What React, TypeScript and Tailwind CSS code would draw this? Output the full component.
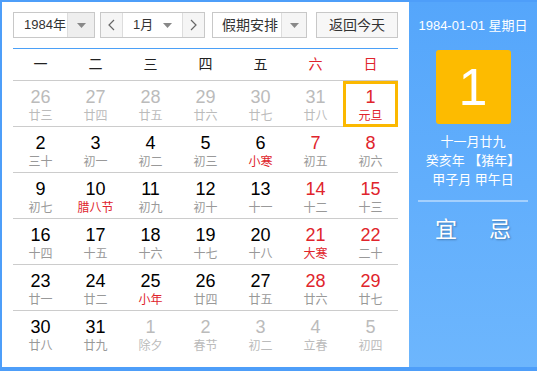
import React from 'react';

type Day = { d: number; l: string; other?: boolean; festival?: boolean; sel?: boolean };

const WEEK = ['一', '二', '三', '四', '五', '六', '日'];

const ROWS: Day[][] = [
  [
    { d: 26, l: '廿三', other: true },
    { d: 27, l: '廿四', other: true },
    { d: 28, l: '廿五', other: true },
    { d: 29, l: '廿六', other: true },
    { d: 30, l: '廿七', other: true },
    { d: 31, l: '廿八', other: true },
    { d: 1, l: '元旦', festival: true, sel: true },
  ],
  [
    { d: 2, l: '三十' },
    { d: 3, l: '初一' },
    { d: 4, l: '初二' },
    { d: 5, l: '初三' },
    { d: 6, l: '小寒', festival: true },
    { d: 7, l: '初五' },
    { d: 8, l: '初六' },
  ],
  [
    { d: 9, l: '初七' },
    { d: 10, l: '腊八节', festival: true },
    { d: 11, l: '初九' },
    { d: 12, l: '初十' },
    { d: 13, l: '十一' },
    { d: 14, l: '十二' },
    { d: 15, l: '十三' },
  ],
  [
    { d: 16, l: '十四' },
    { d: 17, l: '十五' },
    { d: 18, l: '十六' },
    { d: 19, l: '十七' },
    { d: 20, l: '十八' },
    { d: 21, l: '大寒', festival: true },
    { d: 22, l: '二十' },
  ],
  [
    { d: 23, l: '廿一' },
    { d: 24, l: '廿二' },
    { d: 25, l: '小年', festival: true },
    { d: 26, l: '廿四' },
    { d: 27, l: '廿五' },
    { d: 28, l: '廿六' },
    { d: 29, l: '廿七' },
  ],
  [
    { d: 30, l: '廿八' },
    { d: 31, l: '廿九' },
    { d: 1, l: '除夕', other: true },
    { d: 2, l: '春节', other: true },
    { d: 3, l: '初二', other: true },
    { d: 4, l: '立春', other: true },
    { d: 5, l: '初四', other: true },
  ],
];

const Caret = () => (
  <svg width="9" height="5" viewBox="0 0 9 5">
    <path d="M0 0 L9 0 L4.5 5 Z" fill="#888" />
  </svg>
);

const Chevron = ({ dir }: { dir: 'l' | 'r' }) => (
  <svg width="7" height="12" viewBox="0 0 7 12">
    <path d={dir === 'l' ? 'M6 1 L1 6 L6 11' : 'M1 1 L6 6 L1 11'} stroke="#666" strokeWidth="1.2" fill="none" />
  </svg>
);

export default function App() {
  return (
    <div
      className="flex h-[371px] w-[537px] bg-[#4e9ef9] pt-[2px] pb-[4px] pl-[2px]"
      style={{ fontFamily: '"Liberation Sans", "Noto Sans CJK SC", sans-serif' }}
    >
      {/* left: calendar */}
      <div className="w-[407px] bg-white px-[11px] pt-[10px]">
        <div className="flex h-[26px] items-stretch text-[13px] text-[#333]">
          <div className="flex w-[82px] border border-[#c8c8c8]">
            <div className="flex flex-1 items-center pl-[10px]">1984年</div>
            <div className="flex w-[27px] items-center justify-center border-l border-[#ddd] bg-[#eeeeee]">
              <Caret />
            </div>
          </div>
          <div className="ml-[5px] flex w-[105px] border border-[#c8c8c8]">
            <div className="flex w-[22px] items-center justify-center border-r border-[#ddd] bg-[#f5f5f5]">
              <Chevron dir="l" />
            </div>
            <div className="flex flex-1 items-center justify-between pl-[10px] pr-[10px]">
              <span>1月</span>
              <Caret />
            </div>
            <div className="flex w-[22px] items-center justify-center border-l border-[#ddd] bg-[#f5f5f5]">
              <Chevron dir="r" />
            </div>
          </div>
          <div className="ml-[7px] flex w-[95px] border border-[#c8c8c8]">
            <div className="flex flex-1 items-center pl-[9px] text-[14px]">假期安排</div>
            <div className="flex w-[25px] items-center justify-center border-l border-[#ddd] bg-[#f5f5f5]">
              <Caret />
            </div>
          </div>
          <div className="ml-[9px] flex w-[82px] items-center justify-center border border-[#c8c8c8] bg-[#f7f7f7] text-[14px]">
            返回今天
          </div>
        </div>

        <div className="mt-[10px] h-px bg-[#4ba0f7]" />

        <div className="grid h-[32px] grid-cols-7 border-b border-[#cccccc] text-[14px]">
          {WEEK.map((w, i) => (
            <div key={w} className={`flex items-center justify-center ${i >= 5 ? 'text-[#e0242c]' : 'text-[#222]'}`}>
              {w}
            </div>
          ))}
        </div>

        {ROWS.map((row, ri) => (
          <div
            key={ri}
            className={`grid h-[46px] grid-cols-7 ${ri < ROWS.length - 1 ? 'border-b border-[#cccccc]' : ''}`}
          >
            {row.map((c, ci) => {
              const weekend = ci >= 5;
              const numColor = c.other ? 'text-[#bbbbbb]' : c.sel || weekend ? 'text-[#e0242c]' : 'text-black';
              const lunarColor = c.other ? 'text-[#bbbbbb]' : c.festival ? 'text-[#e0242c]' : 'text-[#999999]';
              return (
                <div
                  key={ci}
                  className={`flex flex-col items-center justify-center border-[3px] pt-[3px] ${c.sel ? 'border-[#fbb800]' : 'border-transparent'}`}
                >
                  <div className={`text-[18px] leading-[20px] ${numColor}`}>{c.d}</div>
                  <div className={`mt-[1px] text-[12px] leading-[16px] ${lunarColor}`}>{c.l}</div>
                </div>
              );
            })}
          </div>
        ))}
      </div>

      {/* right: day detail */}
      <div className="flex flex-1 flex-col items-center bg-gradient-to-b from-[#55a6fb] to-[#6db6fd] text-white">
        <div className="mt-[15px] text-[13px] leading-[18px]">1984-01-01 星期日</div>
        <div className="mt-[15px] flex h-[74px] w-[75px] items-center justify-center rounded-[3px] bg-[#fdbb00] text-[52px] leading-none">
          1
        </div>
        <div className="mt-[8px] text-[13px] leading-[19px]">十一月廿九</div>
        <div className="text-[13px] leading-[19px]">癸亥年 【猪年】</div>
        <div className="text-[13px] leading-[19px]">甲子月 甲午日</div>
        <div className="mt-[11px] h-[2px] w-[110px] bg-[#a4d0fd]" />
        <div className="mt-[14px] flex w-full justify-center gap-[32px] text-[22px] leading-[28px] [text-shadow:1px_1px_2px_rgba(0,0,0,0.3)]">
          <span>宜</span>
          <span>忌</span>
        </div>
      </div>
    </div>
  );
}
